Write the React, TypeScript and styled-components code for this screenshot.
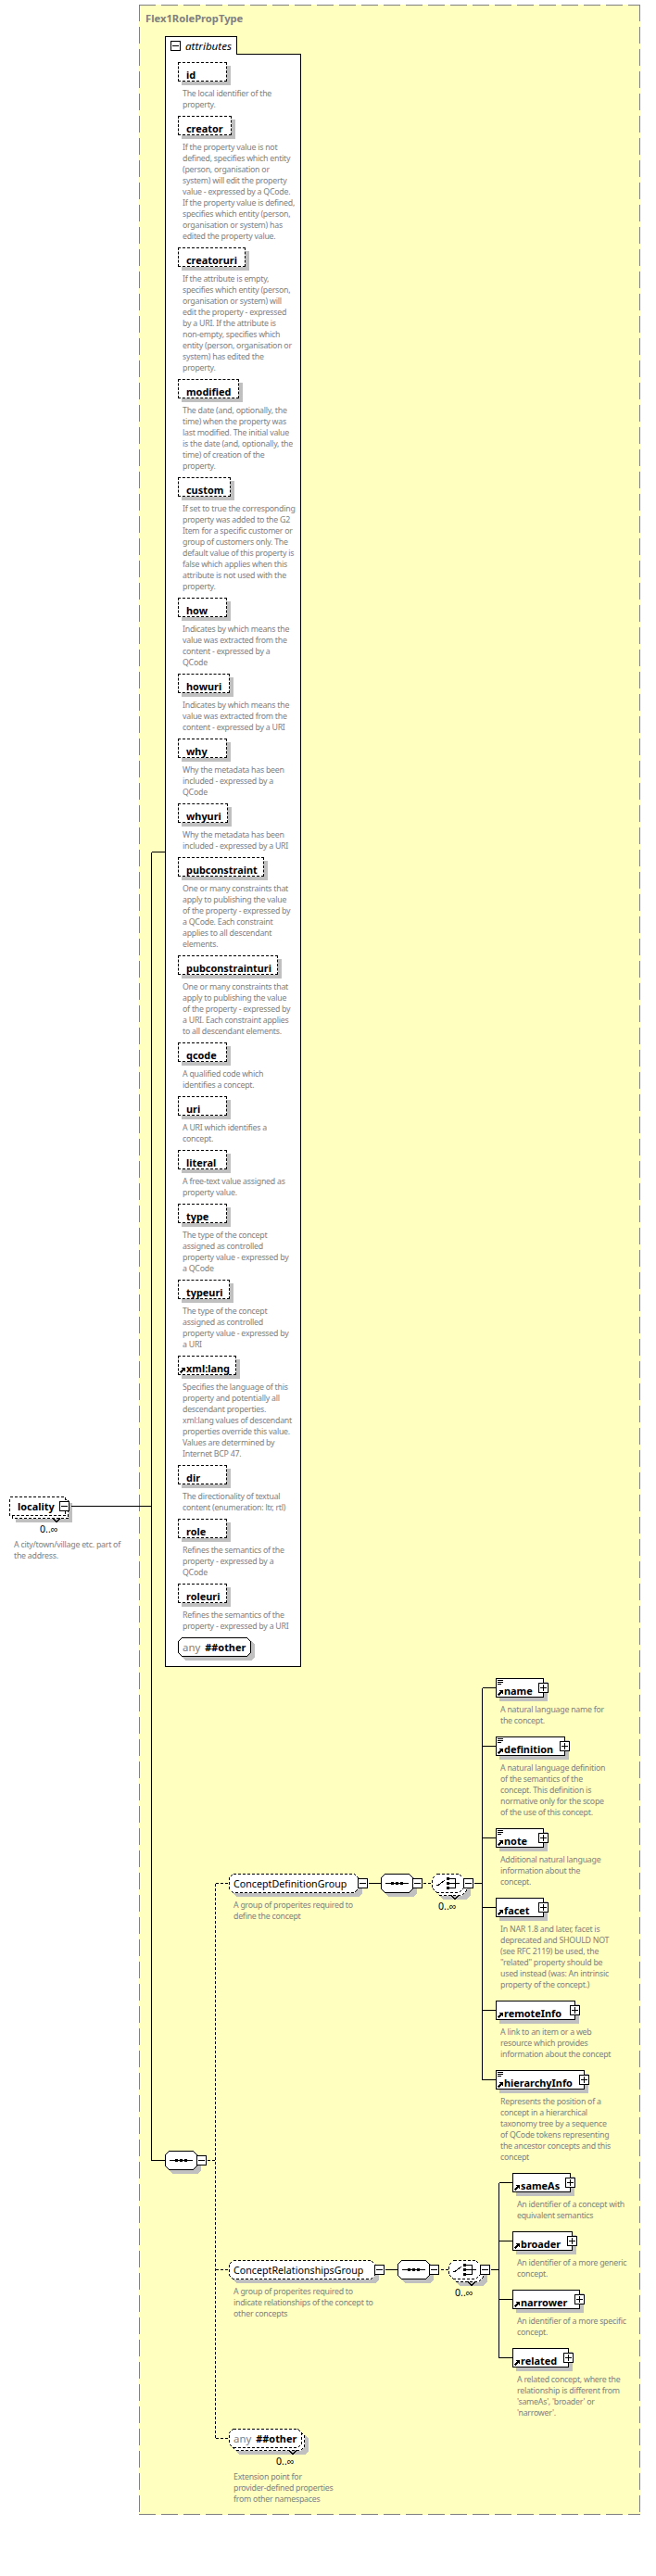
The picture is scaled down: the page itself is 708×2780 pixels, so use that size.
import React from 'react';
import styled, { createGlobalStyle } from 'styled-components';

const FONT = '"Noto Sans", "Liberation Sans", sans-serif';

const GlobalStyle = createGlobalStyle`
  html, body {
    margin: 0;
    padding: 0;
    background: #fff;
    overflow: hidden;
  }
  body {
    font-family: ${FONT};
  }
`;

type Attr = { name: string; width: number; doc: string; arrow?: boolean };
type Elem = { name: string; width: number; doc: string; lines?: boolean };

const attrs: Attr[] = [
  { name: 'id', width: 53, doc: 'The local identifier of the\nproperty.' },
  {
    name: 'creator',
    width: 58,
    doc: 'If the property value is not\ndefined, specifies which entity\n(person, organisation or\nsystem) will edit the property\nvalue - expressed by a QCode.\nIf the property value is defined,\nspecifies which entity (person,\norganisation or system) has\nedited the property value.',
  },
  {
    name: 'creatoruri',
    width: 73,
    doc: 'If the attribute is empty,\nspecifies which entity (person,\norganisation or system) will\nedit the property - expressed\nby a URI. If the attribute is\nnon-empty, specifies which\nentity (person, organisation or\nsystem) has edited the\nproperty.',
  },
  {
    name: 'modified',
    width: 66,
    doc: 'The date (and, optionally, the\ntime) when the property was\nlast modified. The initial value\nis the date (and, optionally, the\ntime) of creation of the\nproperty.',
  },
  {
    name: 'custom',
    width: 57,
    doc: 'If set to true the corresponding\nproperty was added to the G2\nItem for a specific customer or\ngroup of customers only. The\ndefault value of this property is\nfalse which applies when this\nattribute is not used with the\nproperty.',
  },
  {
    name: 'how',
    width: 53,
    doc: 'Indicates by which means the\nvalue was extracted from the\ncontent - expressed by a\nQCode',
  },
  {
    name: 'howuri',
    width: 56,
    doc: 'Indicates by which means the\nvalue was extracted from the\ncontent - expressed by a URI',
  },
  { name: 'why', width: 53, doc: 'Why the metadata has been\nincluded - expressed by a\nQCode' },
  { name: 'whyuri', width: 54, doc: 'Why the metadata has been\nincluded - expressed by a URI' },
  {
    name: 'pubconstraint',
    width: 93,
    doc: 'One or many constraints that\napply to publishing the value\nof the property - expressed by\na QCode. Each constraint\napplies to all descendant\nelements.',
  },
  {
    name: 'pubconstrainturi',
    width: 108,
    doc: 'One or many constraints that\napply to publishing the value\nof the property - expressed by\na URI. Each constraint applies\nto all descendant elements.',
  },
  { name: 'qcode', width: 53, doc: 'A qualified code which\nidentifies a concept.' },
  { name: 'uri', width: 53, doc: 'A URI which identifies a\nconcept.' },
  { name: 'literal', width: 53, doc: 'A free-text value assigned as\nproperty value.' },
  {
    name: 'type',
    width: 53,
    doc: 'The type of the concept\nassigned as controlled\nproperty value - expressed by\na QCode',
  },
  {
    name: 'typeuri',
    width: 56,
    doc: 'The type of the concept\nassigned as controlled\nproperty value - expressed by\na URI',
  },
  {
    name: 'xml:lang',
    width: 63,
    arrow: true,
    doc: 'Specifies the language of this\nproperty and potentially all\ndescendant properties.\nxml:lang values of descendant\nproperties override this value.\nValues are determined by\nInternet BCP 47.',
  },
  { name: 'dir', width: 53, doc: 'The directionality of textual\ncontent (enumeration: ltr, rtl)' },
  { name: 'role', width: 53, doc: 'Refines the semantics of the\nproperty - expressed by a\nQCode' },
  { name: 'roleuri', width: 53, doc: 'Refines the semantics of the\nproperty - expressed by a URI' },
];

const definitionElems: Elem[] = [
  { name: 'name', width: 52, lines: true, doc: 'A natural language name for\nthe concept.' },
  {
    name: 'definition',
    width: 75,
    lines: true,
    doc: 'A natural language definition\nof the semantics of the\nconcept. This definition is\nnormative only for the scope\nof the use of this concept.',
  },
  {
    name: 'note',
    width: 52,
    lines: true,
    doc: 'Additional natural language\ninformation about the\nconcept.',
  },
  {
    name: 'facet',
    width: 52,
    doc: 'In NAR 1.8 and later, facet is\ndeprecated and SHOULD NOT\n(see RFC 2119) be used, the\n"related" property should be\nused instead (was: An intrinsic\nproperty of the concept.)',
  },
  {
    name: 'remoteInfo',
    width: 86,
    doc: 'A link to an item or a web\nresource which provides\ninformation about the concept',
  },
  {
    name: 'hierarchyInfo',
    width: 96,
    lines: true,
    doc: 'Represents the position of a\nconcept in a hierarchical\ntaxonomy tree by a sequence\nof QCode tokens representing\nthe ancestor concepts and this\nconcept',
  },
];

const relationshipElems: Elem[] = [
  { name: 'sameAs', width: 63, doc: 'An identifier of a concept with\nequivalent semantics' },
  { name: 'broader', width: 65, doc: 'An identifier of a more generic\nconcept.' },
  { name: 'narrower', width: 73, doc: 'An identifier of a more specific\nconcept.' },
  {
    name: 'related',
    width: 61,
    doc: "A related concept, where the\nrelationship is different from\n'sameAs', 'broader' or\n'narrower'.",
  },
];

// connector wires: [x1, y1, x2, y2, dashed]
const wires: [number, number, number, number, boolean?][] = [
  [76, 1625, 163, 1625],
  [163, 919, 163, 2331],
  [163, 919, 178, 919],
  [163, 2331, 178, 2331],
  [223, 2331, 232, 2331, true],
  [232, 2032, 232, 2631, true],
  [232, 2032, 247, 2032, true],
  [232, 2449, 247, 2449, true],
  [232, 2631, 247, 2631, true],
  [397, 2032, 411, 2032],
  [456, 2032, 466, 2032, true],
  [511, 2032, 520, 2032],
  [520, 1821, 520, 2244],
  [520, 1821, 535, 1821],
  [520, 1884, 535, 1884],
  [520, 1983, 535, 1983],
  [520, 2058, 535, 2058],
  [520, 2169, 535, 2169],
  [520, 2244, 535, 2244],
  [415, 2449, 429, 2449],
  [475, 2449, 484, 2449, true],
  [529, 2449, 538, 2449],
  [538, 2355, 538, 2544],
  [538, 2355, 553, 2355],
  [538, 2418, 553, 2418],
  [538, 2481, 553, 2481],
  [538, 2544, 553, 2544],
];

const octagon = (x: number, y: number, w: number, h: number, c: number) =>
  [
    [x + c, y],
    [x + w - c, y],
    [x + w, y + c],
    [x + w, y + h - c],
    [x + w - c, y + h],
    [x + c, y + h],
    [x, y + h - c],
    [x, y + c],
  ]
    .map((p) => p.join(','))
    .join(' ');

function NodeShape({
  w,
  cut = 4,
  dashed,
  stacked,
  notch,
}: {
  w: number;
  cut?: number;
  dashed?: boolean;
  stacked?: boolean;
  notch?: number;
}) {
  const h = 20;
  const iw = w - 1;
  const dash = dashed ? '3 2' : undefined;
  const off = stacked ? 3 : 0;
  return (
    <ShapeSvg width={w + 10} height={h + 11}>
      <polygon points={octagon(off + 4, off + 4, iw + 1, h + 1, cut)} fill="#c0c0c0" />
      {stacked && (
        <polygon
          points={octagon(3.5, 3.5, iw, h, cut)}
          fill="#fff"
          stroke="#000"
          strokeDasharray={dash}
        />
      )}
      <polygon
        points={octagon(0.5, 0.5, iw, h, cut)}
        fill="#fff"
        stroke="#000"
        strokeDasharray={dash}
      />
      {notch !== undefined && (
        <polyline
          points={`${notch - 4},${h + 3.5} ${notch},${h + 7.5} ${notch + 4},${h + 3.5}`}
          fill="none"
          stroke="#000"
        />
      )}
    </ShapeSvg>
  );
}

function SequenceGlyph() {
  return (
    <GlyphSvg width={35} height={21}>
      <path d="M5 10.5H30" stroke="#000" />
      <rect x={11} y={9} width={3} height={3} />
      <rect x={16} y={9} width={3} height={3} />
      <rect x={21} y={9} width={3} height={3} />
    </GlyphSvg>
  );
}

function ChoiceGlyph() {
  return (
    <GlyphSvg width={35} height={21}>
      <path d="M5 12.5H7L14 7" fill="none" stroke="#000" />
      <rect x={16} y={4} width={3} height={3} />
      <rect x={16} y={9} width={3} height={3} />
      <rect x={16} y={14} width={3} height={3} />
      <path d="M19 5.5H25.5V15.5H19M19 10.5H30" fill="none" stroke="#000" />
    </GlyphSvg>
  );
}

function RefIcon({ lines, arrow }: { lines?: boolean; arrow?: boolean }) {
  return (
    <GlyphSvg width={9} height={20}>
      {lines && <path d="M1 1.5H7M1 3.5H7M1 5.5H5" stroke="#000" />}
      {arrow && (
        <>
          <path d="M1.5 17.5L4.5 14.5" stroke="#000" strokeWidth={1.6} fill="none" />
          <polygon points="2.5,12 6.5,12 6.5,16" />
        </>
      )}
    </GlyphSvg>
  );
}

function ToggleBox({ open, className }: { open?: boolean; className?: string }) {
  return (
    <Toggle className={className}>
      <ToggleBar />
      {!open && <ToggleStem />}
    </Toggle>
  );
}

function ElementNode({ elem }: { elem: Elem }) {
  return (
    <ElementItem>
      <ElementBox $w={elem.width}>
        <RefIcon lines={elem.lines} arrow />
        <NodeLabel>{elem.name}</NodeLabel>
        <ElementToggle />
      </ElementBox>
      <ElementDoc>{elem.doc}</ElementDoc>
    </ElementItem>
  );
}

function GroupSteps({ name, width, doc }: { name: string; width: number; doc: string }) {
  return (
    <Steps>
      <Step $w={width} $gap={0}>
        <ShapeNode $w={width}>
          <NodeShape w={width} dashed />
          <GroupLabel>{name}</GroupLabel>
          <EdgeToggle open />
        </ShapeNode>
        <GroupDoc>{doc}</GroupDoc>
      </Step>
      <Step $w={35} $gap={24}>
        <ShapeNode $w={35}>
          <NodeShape w={35} />
          <SequenceGlyph />
          <EdgeToggle open />
        </ShapeNode>
      </Step>
      <Step $w={35} $gap={20}>
        <ShapeNode $w={35}>
          <NodeShape w={35} cut={5} dashed stacked notch={25} />
          <ChoiceGlyph />
          <EdgeToggle open />
        </ShapeNode>
        <ChoiceCount>0..∞</ChoiceCount>
      </Step>
    </Steps>
  );
}

export default function App() {
  return (
    <Page>
      <GlobalStyle />
      <LocalityColumn>
        <ShapeNode $w={61}>
          <NodeShape w={61} cut={0} dashed stacked notch={51} />
          <LocalityLabel>locality</LocalityLabel>
          <LocalityToggle open />
        </ShapeNode>
        <LocalityCount>0..∞</LocalityCount>
        <LocalityDoc>{'A city/town/village etc. part of\nthe address.'}</LocalityDoc>
      </LocalityColumn>

      <TypeBox>
        <Title>Flex1RolePropType</Title>
        <AttributesTab>
          <TabToggle open />
          <TabLabel>attributes</TabLabel>
        </AttributesTab>
        <AttributesPanel>
          {attrs.map((a) => (
            <AttrItem key={a.name}>
              <AttrBox $w={a.width}>
                {a.arrow && <RefIcon arrow />}
                <NodeLabel>{a.name}</NodeLabel>
              </AttrBox>
              <AttrDoc>{a.doc}</AttrDoc>
            </AttrItem>
          ))}
          <ShapeNode $w={79}>
            <NodeShape w={79} />
            <AnyWord>any</AnyWord>
            <AnyName>##other</AnyName>
          </ShapeNode>
        </AttributesPanel>

        <Sequence>
          <ShapeNode $w={35}>
            <NodeShape w={35} />
            <SequenceGlyph />
            <EdgeToggle open />
          </ShapeNode>
        </Sequence>

        <Tree>
          <Branch>
            <BranchSteps $w={288} $top={211}>
              <GroupSteps
                name="ConceptDefinitionGroup"
                width={140}
                doc={'A group of properites required to\ndefine the concept'}
              />
            </BranchSteps>
            <div>
              {definitionElems.map((e) => (
                <ElementNode key={e.name} elem={e} />
              ))}
            </div>
          </Branch>
          <Branch>
            <BranchSteps $w={306} $top={94}>
              <GroupSteps
                name="ConceptRelationshipsGroup"
                width={158}
                doc={'A group of properites required to\nindicate relationships of the concept to\nother concepts'}
              />
            </BranchSteps>
            <div>
              {relationshipElems.map((e) => (
                <ElementNode key={e.name} elem={e} />
              ))}
            </div>
          </Branch>
          <ShapeNode $w={79}>
            <NodeShape w={79} dashed stacked notch={69} />
            <AnyWord>any</AnyWord>
            <AnyName>##other</AnyName>
          </ShapeNode>
          <AnyCount>0..∞</AnyCount>
          <AnyDoc>{'Extension point for\nprovider-defined properties\nfrom other namespaces'}</AnyDoc>
        </Tree>
      </TypeBox>

      <Wires width={708} height={2780}>
        {wires.map(([x1, y1, x2, y2, dashed], i) => (
          <line
            key={i}
            x1={x1 + 0.5}
            y1={y1 + 0.5}
            x2={x2 + 0.5}
            y2={y2 + 0.5}
            stroke="#000"
            strokeDasharray={dashed ? '3 2' : undefined}
          />
        ))}
      </Wires>
    </Page>
  );
}

const Page = styled.div`
  position: relative;
  display: flex;
  align-items: flex-start;
  width: 708px;
  height: 2780px;
  padding: 5px 0 0 10px;
  box-sizing: border-box;
`;

const Wires = styled.svg`
  position: absolute;
  top: 0;
  left: 0;
  pointer-events: none;
  shape-rendering: crispEdges;
`;

const ShapeSvg = styled.svg`
  position: absolute;
  top: 0;
  left: 0;
  overflow: visible;
  shape-rendering: crispEdges;
`;

const GlyphSvg = styled.svg`
  position: absolute;
  top: 0;
  left: 0;
  shape-rendering: crispEdges;
`;

const Doc = styled.div`
  font-size: 8.8px;
  letter-spacing: -0.25px;
  line-height: 12px;
  color: #808080;
  white-space: pre;
`;

const NodeLabel = styled.span`
  position: relative;
  font-size: 10.9px;
  line-height: 19px;
  font-weight: 700;
  color: #000;
  white-space: nowrap;
`;

const Count = styled.div`
  font-size: 10.6px;
  line-height: 12px;
  color: #000;
`;

const Toggle = styled.span`
  position: absolute;
  display: block;
  width: 11px;
  height: 11px;
  box-sizing: border-box;
  border: 1px solid #000;
  background: #fff;
`;

const ToggleBar = styled.span`
  position: absolute;
  left: 1px;
  top: 4px;
  width: 7px;
  height: 1px;
  background: #000;
`;

const ToggleStem = styled.span`
  position: absolute;
  left: 4px;
  top: 1px;
  width: 1px;
  height: 7px;
  background: #000;
`;

const EdgeToggle = styled(ToggleBox)`
  left: calc(100% - 1px);
  top: 5px;
`;

const ElementToggle = styled(ToggleBox)`
  right: -6px;
  top: 4px;
`;

const LocalityToggle = styled(ToggleBox)`
  left: 54px;
  top: 5px;
`;

const TabToggle = styled(ToggleBox)`
  position: relative;
  flex: none;
`;

const ShapeNode = styled.div<{ $w: number }>`
  position: relative;
  display: flex;
  align-items: center;
  width: ${({ $w }) => $w}px;
  height: 21px;
`;

const LocalityColumn = styled.div`
  flex: none;
  width: 140px;
  margin-top: 1610px;
`;

const LocalityLabel = styled(NodeLabel)`
  margin-left: 9px;
`;

const LocalityCount = styled(Count)`
  margin: 8px 0 0 33px;
`;

const LocalityDoc = styled(Doc)`
  margin: 5px 0 0 5px;
`;

const TypeBox = styled.div`
  flex: none;
  width: 541px;
  height: 2709px;
  background:
    repeating-linear-gradient(90deg, #808080 0 18px, transparent 18px 24px) top left / 100% 1px no-repeat,
    repeating-linear-gradient(90deg, #808080 0 18px, transparent 18px 24px) bottom left / 100% 1px no-repeat,
    repeating-linear-gradient(180deg, #808080 0 18px, transparent 18px 24px) top left / 1px 100% no-repeat,
    repeating-linear-gradient(180deg, #808080 0 18px, transparent 18px 24px) top right / 1px 100% no-repeat,
    #ffffc0;
`;

const Title = styled.div`
  margin: 0 0 0 7px;
  padding-top: 8px;
  font-size: 11.2px;
  line-height: 14px;
  font-weight: 700;
  color: #808080;
`;

const AttributesTab = styled.div`
  position: relative;
  z-index: 1;
  display: flex;
  align-items: center;
  gap: 5px;
  width: 78px;
  height: 20px;
  margin: 12px 0 0 28px;
  padding-left: 5px;
  box-sizing: border-box;
  border: 1px solid #000;
  border-bottom: 0;
  background: #fff;
`;

const TabLabel = styled.span`
  font-size: 11.6px;
  font-style: italic;
  color: #000;
`;

const AttributesPanel = styled.div`
  width: 147px;
  height: 1741px;
  margin: -1px 0 0 28px;
  padding: 8px 0 0 13px;
  box-sizing: border-box;
  border: 1px solid #000;
  background: #fff;
`;

const AttrItem = styled.div`
  margin-bottom: 6px;
`;

const AttrBox = styled.div<{ $w: number }>`
  position: relative;
  width: ${({ $w }) => $w}px;
  height: 21px;
  padding-left: 8px;
  box-sizing: border-box;
  border: 1px dashed #000;
  background: #fff;
  box-shadow: 4px 4px 0 #c0c0c0;
`;

const AttrDoc = styled(Doc)`
  margin: 7px 0 0 5px;
`;

const AnyWord = styled.span`
  position: relative;
  margin-left: 5px;
  font-size: 11.4px;
  color: #808080;
`;

const AnyName = styled(NodeLabel)`
  margin-left: 5px;
`;

const Sequence = styled.div`
  position: absolute;
  left: 178px;
  top: 2321px;
`;

const Tree = styled.div`
  margin: 12px 0 0 97px;
`;

const Branch = styled.div`
  display: flex;
  align-items: flex-start;
`;

const BranchSteps = styled.div<{ $w: number; $top: number }>`
  flex: none;
  width: ${({ $w }) => $w}px;
  margin-top: ${({ $top }) => $top}px;
`;

const Steps = styled.div`
  display: flex;
  align-items: flex-start;
`;

const Step = styled.div<{ $w: number; $gap: number }>`
  flex: none;
  width: ${({ $w }) => $w}px;
  margin-left: ${({ $gap }) => $gap}px;
`;

const GroupLabel = styled.span`
  position: relative;
  margin-left: 5px;
  font-size: 10.7px;
  color: #000;
  white-space: nowrap;
`;

const GroupDoc = styled(Doc)`
  margin: 7px 0 0 5px;
`;

const ChoiceCount = styled(Count)`
  margin: 8px 0 0 7px;
  white-space: nowrap;
`;

const ElementItem = styled.div`
  margin-bottom: 11px;
`;

const ElementBox = styled.div<{ $w: number }>`
  position: relative;
  width: ${({ $w }) => $w}px;
  height: 21px;
  padding-left: 8px;
  box-sizing: border-box;
  border: 1px solid #000;
  background: #fff;
  box-shadow: 4px 4px 0 #c0c0c0;
`;

const ElementDoc = styled(Doc)`
  margin: 7px 0 0 5px;
`;

const AnyCount = styled(Count)`
  margin: 8px 0 0 51px;
`;

const AnyDoc = styled(Doc)`
  margin: 5px 0 0 5px;
`;
